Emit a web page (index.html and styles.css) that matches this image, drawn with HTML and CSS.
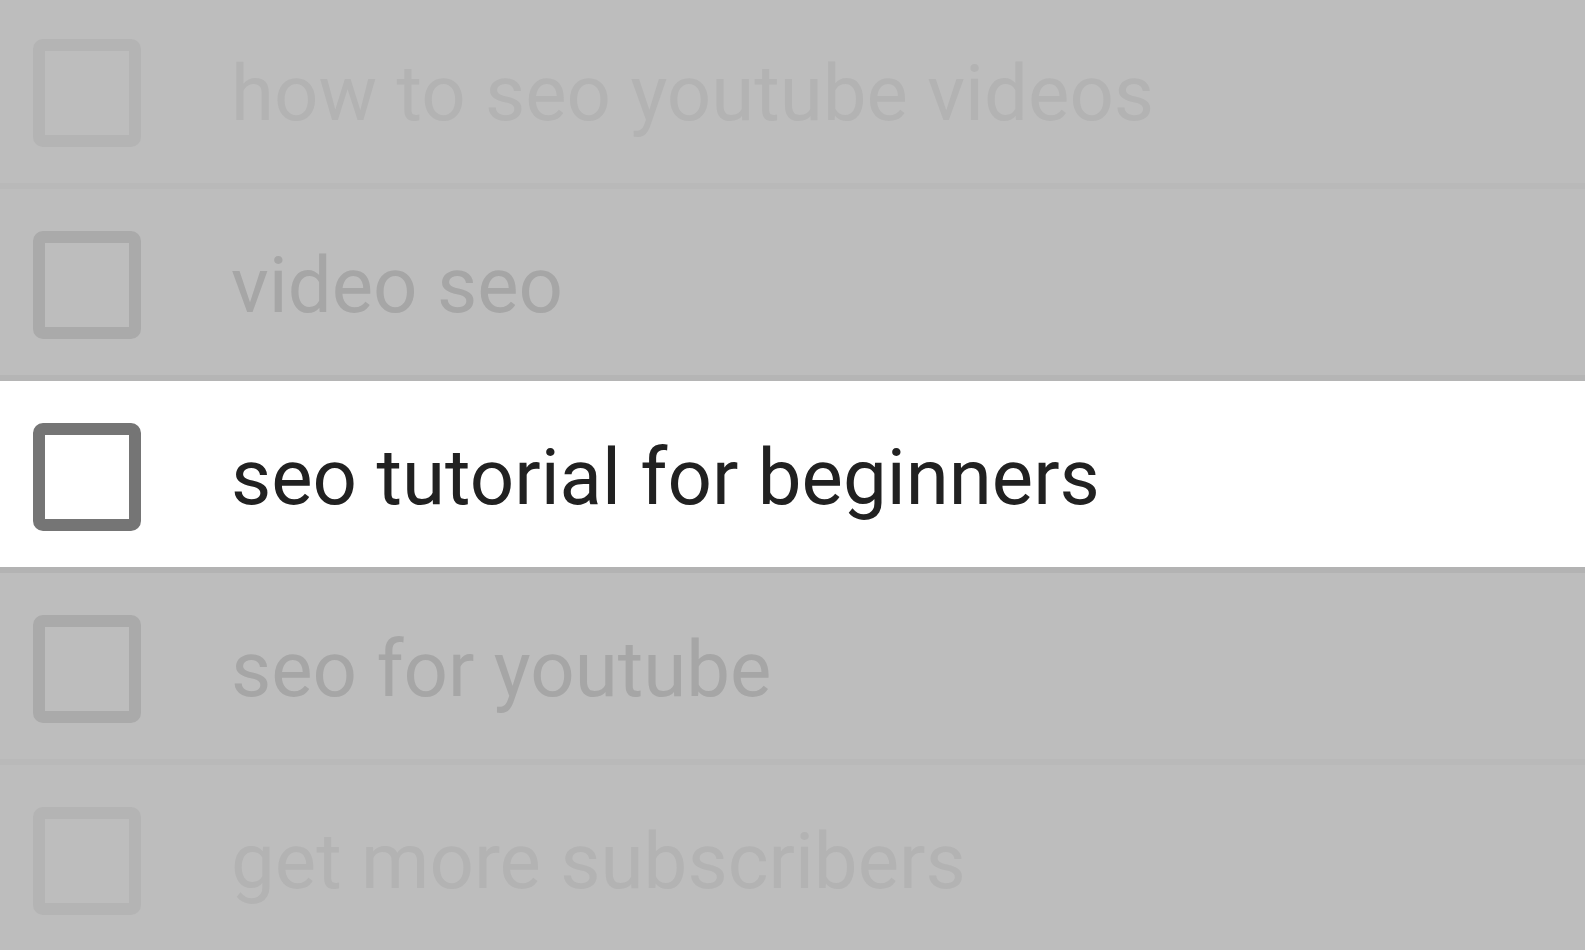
FILE: index.html
```html
<!DOCTYPE html>
<html lang="en">
<head>
    <meta charset="UTF-8">
    <title>Keyword list</title>
    <link rel="stylesheet" href="styles.css">
</head>
<body>
    <ul class="keyword-list">
        <li class="keyword faded">
            <span class="checkbox"></span>
            <span class="label">how to seo youtube videos</span>
        </li>
        <li class="keyword dim before-active">
            <span class="checkbox"></span>
            <span class="label">video seo</span>
        </li>
        <li class="keyword active">
            <span class="checkbox"></span>
            <span class="label">seo tutorial for beginners</span>
        </li>
        <li class="keyword dim">
            <span class="checkbox"></span>
            <span class="label">seo for youtube</span>
        </li>
        <li class="keyword faded">
            <span class="checkbox"></span>
            <span class="label">get more subscribers</span>
        </li>
    </ul>
</body>
</html>
```

FILE: styles.css
```css
body {
    margin: 0;
    background-color: #bdbdbd;
    font-family: Roboto, "Liberation Sans", sans-serif;
    overflow: hidden;
}

.keyword-list {
    list-style: none;
    margin: -3px 0 0 0;
    padding: 0;
}

.keyword {
    display: flex;
    align-items: center;
    box-sizing: border-box;
    height: 192px;
    padding: 6px 0 0 33px;
    border-bottom: 6px solid #b9b9b9;
}

.checkbox {
    width: 108px;
    height: 108px;
    box-sizing: border-box;
    border: 12px solid #757575;
    border-radius: 10px;
    flex-shrink: 0;
}

.label {
    margin-left: 90px;
    font-size: 78px;
    color: #212121;
    white-space: nowrap;
}

.active {
    background-color: #fff;
    border-bottom-color: #b3b3b3;
}

.before-active {
    border-bottom-color: #b5b5b5;
}

.dim .checkbox {
    border-color: #aaaaaa;
}

.dim .label {
    color: #a6a6a6;
}

.faded .checkbox {
    border-color: #b4b4b4;
}

.faded .label {
    color: #b3b3b3;
}
```
